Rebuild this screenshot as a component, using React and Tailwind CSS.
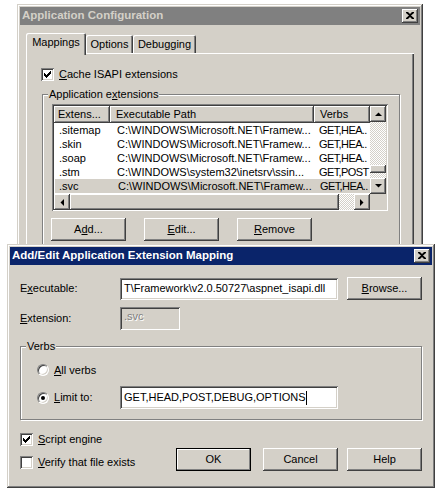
import React from 'react';

const raised =
  'shadow-[inset_-1px_-1px_0_#404040,inset_1px_1px_0_#ffffff,inset_-2px_-2px_0_#808080]';
const windowEdge =
  'shadow-[inset_-1px_-1px_0_#404040,inset_1px_1px_0_#d4d0c8,inset_-2px_-2px_0_#808080,inset_2px_2px_0_#ffffff]';
const sunken =
  'shadow-[inset_1px_1px_0_#808080,inset_-1px_-1px_0_#ffffff,inset_2px_2px_0_#404040,inset_-2px_-2px_0_#d4d0c8]';
const dither =
  'bg-[repeating-conic-gradient(#ffffff_0_25%,#d4d0c8_0_50%)] bg-[length:2px_2px]';

const U = ({ children }) => <span className="underline underline-offset-[1px]">{children}</span>;

const CloseButton = () => (
  <div className={`flex items-center justify-center w-[16px] h-[14px] bg-[#d4d0c8] ${raised}`}>
    <svg width="8" height="7" viewBox="0 0 8 7" className="mb-[1px]">
      <path d="M0 0h2l2 2 2-2h2v1L5 3.5 8 6v1H6L4 5 2 7H0V6l3-2.5L0 1z" fill="#000" />
    </svg>
  </div>
);

const TitleBar = ({ title, active }) => (
  <div
    className={`flex items-center justify-between h-[18px] pl-[2px] pr-[2px] ${
      active ? 'bg-[#0a246a] text-white' : 'bg-[#808080] text-[#d4d0c8]'
    }`}
  >
    <span className="font-bold text-[11.5px] leading-none">{title}</span>
    <CloseButton />
  </div>
);

const Button = ({ children, isDefault, className = '' }) => (
  <div
    className={`flex items-center justify-center w-[75px] h-[23px] bg-[#d4d0c8] ${
      isDefault
        ? 'border border-black shadow-[inset_-1px_-1px_0_#808080,inset_1px_1px_0_#ffffff]'
        : raised
    } ${className}`}
  >
    {children}
  </div>
);

const Check = () => (
  <svg width="7" height="7" viewBox="0 0 7 7" shapeRendering="crispEdges">
    <rect x="0" y="2" width="1" height="3" />
    <rect x="1" y="3" width="1" height="3" />
    <rect x="2" y="4" width="1" height="3" />
    <rect x="3" y="3" width="1" height="3" />
    <rect x="4" y="2" width="1" height="3" />
    <rect x="5" y="1" width="1" height="3" />
    <rect x="6" y="0" width="1" height="3" />
  </svg>
);

const Checkbox = ({ checked, children }) => (
  <div className="flex items-center h-[13px] gap-[5px]">
    <div className={`flex items-center justify-center w-[13px] h-[13px] bg-white ${sunken}`}>
      {checked && <Check />}
    </div>
    <span>{children}</span>
  </div>
);

const Radio = ({ checked }) => (
  <div className="flex items-center justify-center w-[12px] h-[12px] rounded-full bg-white border border-t-[#808080] border-l-[#808080] border-r-white border-b-white shadow-[inset_1px_1px_0_#404040,inset_-1px_-1px_0_#d4d0c8]">
    {checked && <div className="w-[4px] h-[4px] rounded-full bg-black" />}
  </div>
);

const GroupBox = ({ label, className = '', children }) => (
  <div
    className={`relative border border-[#808080] shadow-[inset_1px_1px_0_#ffffff,1px_1px_0_#ffffff] ${className}`}
  >
    <span className="absolute left-[5px] -top-[7px] px-[1px] leading-[13px] bg-[#d4d0c8]">
      {label}
    </span>
    {children}
  </div>
);

const Arrow = ({ dir }) => {
  const shapes = {
    up: 'M0 4h7L3.5 0.5z',
    down: 'M0 0h7L3.5 3.5z',
    left: 'M4 0v7L0.5 3.5z',
    right: 'M0 0v7L3.5 3.5z',
  };
  const vertical = dir === 'up' || dir === 'down';
  return (
    <div className={`flex items-center justify-center w-[16px] h-[16px] bg-[#d4d0c8] ${raised}`}>
      <svg width={vertical ? 7 : 4} height={vertical ? 4 : 7} viewBox={vertical ? '0 0 7 4' : '0 0 4 7'}>
        <path d={shapes[dir]} fill="#000" />
      </svg>
    </div>
  );
};

const rows = [
  ['.sitemap', 'C:\\WINDOWS\\Microsoft.NET\\Framew...', 'GET,HEA..'],
  ['.skin', 'C:\\WINDOWS\\Microsoft.NET\\Framew...', 'GET,HEA..'],
  ['.soap', 'C:\\WINDOWS\\Microsoft.NET\\Framew...', 'GET,HEA..'],
  ['.stm', 'C:\\WINDOWS\\system32\\inetsrv\\ssin...', 'GET,POST'],
  ['.svc', 'C:\\WINDOWS\\Microsoft.NET\\Framew...', 'GET,HEA..'],
];

const ListView = () => (
  <div className={`w-[336px] h-[107px] bg-white p-[2px] ${sunken}`}>
    <div className="flex h-[88px]">
      <div className="flex-1 overflow-hidden">
        <div className="flex h-[17px]">
          <div className={`w-[56px] shrink-0 pl-[4px] leading-[17px] bg-[#d4d0c8] ${raised}`}>Extens...</div>
          <div className={`w-[204px] shrink-0 pl-[6px] leading-[17px] bg-[#d4d0c8] ${raised}`}>Executable Path</div>
          <div className={`flex-1 pl-[6px] leading-[17px] bg-[#d4d0c8] ${raised}`}>Verbs</div>
        </div>
        {rows.map((r, i) => (
          <div
            key={r[0]}
            className={`flex h-[14px] leading-[14px] whitespace-nowrap ${i === 4 ? 'bg-[#d4d0c8] ml-[1px]' : ''}`}
          >
            <div className={`w-[56px] shrink-0 ${i === 4 ? 'pl-[4px]' : 'pl-[5px]'}`}>{r[0]}</div>
            <div className="w-[204px] shrink-0 pl-[7px] overflow-hidden">{r[1]}</div>
            <div className="flex-1 pl-[5px] tracking-[-0.6px]">{r[2]}</div>
          </div>
        ))}
      </div>
      <div className="flex flex-col w-[16px]">
        <Arrow dir="up" />
        <div className={`h-[43px] ${dither}`} />
        <div className={`h-[8px] bg-[#d4d0c8] ${raised}`} />
        <div className={`h-[5px] ${dither}`} />
        <Arrow dir="down" />
      </div>
    </div>
    <div className="flex h-[16px]">
      <Arrow dir="left" />
      <div className={`flex-1 bg-[#d4d0c8] ${raised}`} />
      <div className={`w-[15px] ${dither}`} />
      <Arrow dir="right" />
      <div className="w-[16px] bg-[#d4d0c8]" />
    </div>
  </div>
);

const TextBox = ({ className = '', disabled, children }) => (
  <div
    className={`flex items-center h-[22px] pl-[4px] overflow-hidden whitespace-nowrap ${
      disabled ? 'bg-[#d4d0c8] text-[#808080] [text-shadow:1px_1px_0_#ffffff]' : 'bg-white'
    } ${sunken} ${className}`}
  >
    {children}
  </div>
);

const AppConfig = () => (
  <div className={`absolute left-[17px] top-[4px] w-[406px] h-[290px] p-[3px] bg-[#d4d0c8] ${windowEdge}`}>
    <TitleBar title="Application Configuration" />
    <div className="flex items-end h-[20px] mt-[8px] ml-[6px]">
      <div className="relative z-10 flex items-center justify-center w-[60px] h-[22px] -mb-[2px] pb-[3px] bg-[#d4d0c8] rounded-t-[2px] shadow-[inset_1px_1px_0_#ffffff,inset_-1px_0_0_#404040,inset_-2px_0_0_#808080]">
        Mappings
      </div>
      <div className="flex items-center justify-center w-[47px] h-[18px] pt-[1px] rounded-t-[2px] shadow-[inset_1px_1px_0_#ffffff,inset_-1px_0_0_#404040,inset_-2px_0_0_#808080]">
        Options
      </div>
      <div className="flex items-center justify-center w-[63px] h-[18px] pt-[1px] rounded-t-[2px] shadow-[inset_1px_1px_0_#ffffff,inset_-1px_0_0_#404040,inset_-2px_0_0_#808080]">
        Debugging
      </div>
    </div>
    <div className="mx-[6px] h-[230px] pt-[15px] pl-[15px] pr-[14px] shadow-[inset_1px_1px_0_#ffffff,inset_-1px_-1px_0_#404040,inset_-2px_-2px_0_#808080]">
      <Checkbox checked>
        <U>C</U>ache ISAPI extensions
      </Checkbox>
      <GroupBox
        label={
          <>
            Application e<U>x</U>tensions
          </>
        }
        className="mt-[13px] ml-[1px] h-[170px] pt-[9px] pl-[9px]"
      >
        <ListView />
        <div className="flex gap-[18px] mt-[7px] -ml-[1px]">
          <Button>
            A<U>d</U>d...
          </Button>
          <Button>
            <U>E</U>dit...
          </Button>
          <Button>
            <U>R</U>emove
          </Button>
        </div>
      </GroupBox>
    </div>
  </div>
);

const MappingDialog = () => (
  <div className={`absolute left-[7px] top-[244px] w-[428px] h-[244px] p-[3px] bg-[#d4d0c8] ${windowEdge}`}>
    <TitleBar title="Add/Edit Application Extension Mapping" active />
    <div className="px-[10px]">
      <div className="flex items-center h-[23px] mt-[12px]">
        <div className="w-[100px]">
          E<U>x</U>ecutable:
        </div>
        <TextBox className="w-[218px] pl-[2px]">T\Framework\v2.0.50727\aspnet_isapi.dll</TextBox>
        <Button className="ml-[9px]">
          <U>B</U>rowse...
        </Button>
      </div>
      <div className="flex items-center h-[23px] mt-[7px]">
        <div className="w-[100px]">
          <U>E</U>xtension:
        </div>
        <TextBox disabled className="w-[60px] h-[23px] items-start pt-[3px]">
          .svc
        </TextBox>
      </div>
      <GroupBox label="Verbs" className="mt-[16px] h-[74px] pt-[17px] pl-[16px]">
        <div className="flex items-center h-[12px]">
          <div className="flex items-center gap-[5px] w-[83px]">
            <Radio />
            <span>
              <U>A</U>ll verbs
            </span>
          </div>
        </div>
        <div className="flex items-center h-[23px] mt-[10px]">
          <div className="flex items-center gap-[5px] w-[83px]">
            <Radio checked />
            <span>
              <U>L</U>imit to:
            </span>
          </div>
          <TextBox className="w-[218px] h-[23px]">
            GET,HEAD,POST,DEBUG,OPTIONS
            <span className="inline-block w-px h-[14px] bg-black" />
          </TextBox>
        </div>
      </GroupBox>
      <div className="flex justify-between items-start mt-[13px]">
        <div className="flex flex-col gap-[10px]">
          <Checkbox checked>
            <U>S</U>cript engine
          </Checkbox>
          <Checkbox>
            <U>V</U>erify that file exists
          </Checkbox>
        </div>
        <div className="flex mt-[15px]">
          <Button isDefault>OK</Button>
          <Button className="ml-[12px]">Cancel</Button>
          <Button className="ml-[9px]">Help</Button>
        </div>
      </div>
    </div>
  </div>
);

export default function App() {
  return (
    <div className="relative w-[441px] h-[493px] overflow-hidden bg-white text-black text-[11px] leading-[13px] font-['Liberation_Sans',Arial,sans-serif]">
      <AppConfig />
      <MappingDialog />
    </div>
  );
}
